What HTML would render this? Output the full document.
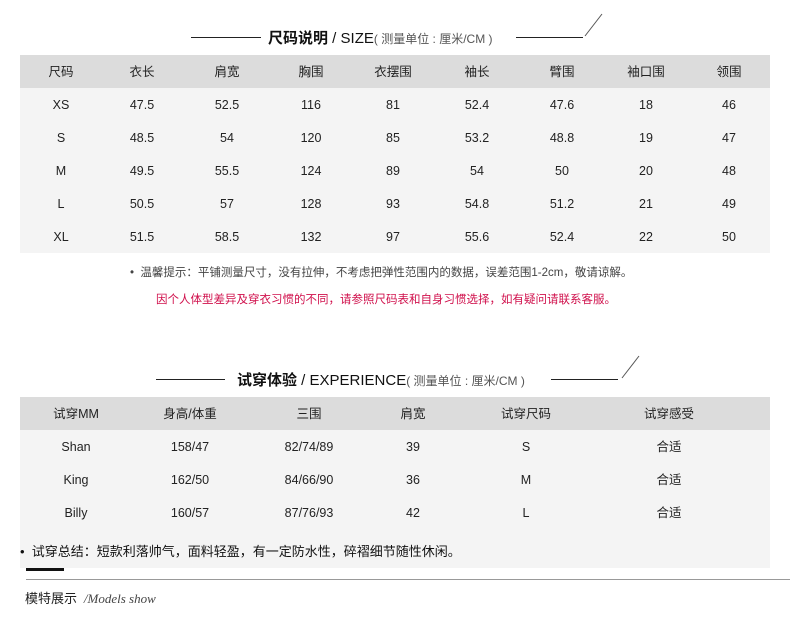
<!DOCTYPE html>
<html><head><meta charset="utf-8"><style>
body{margin:0;width:790px;height:633px;background:#fff;font-family:"Liberation Sans","Noto Sans CJK SC",sans-serif;color:#333;position:relative;overflow:hidden}
.a{position:absolute}
.c{position:absolute;transform:translateX(-50%);white-space:nowrap;font-size:12.5px;line-height:16px;color:#222}
.hd{background:#dcdcdc}
.bd{background:#f4f4f4}
.ln{position:absolute;height:1px;background:#222}
</style></head><body>
<div class="ln" style="left:191px;top:37px;width:70px"></div>
<div class="a" style="left:268px;top:27px;font-size:15px;color:#111;white-space:nowrap"><b>尺码说明</b> / SIZE<span style="font-size:12px;color:#555">( 测量单位 : 厘米/CM )</span></div>
<div class="ln" style="left:516px;top:37px;width:67px"></div>
<svg class="a" style="left:584px;top:13px" width="20" height="24"><line x1="1" y1="23" x2="18" y2="1" stroke="#555" stroke-width="1"/></svg>

<div class="a hd" style="left:20px;top:55px;width:750px;height:33px"></div>
<div class="a bd" style="left:20px;top:88px;width:750px;height:165px"></div>
<div id="t1"></div>

<div class="a" style="left:130px;top:264px;font-size:11.5px;color:#444;white-space:nowrap">•&nbsp; 温馨提示：平铺测量尺寸，没有拉伸，不考虑把弹性范围内的数据，误差范围1-2cm，敬请谅解。</div>
<div class="a" style="left:156px;top:291px;font-size:11.5px;color:#d0104c;white-space:nowrap">因个人体型差异及穿衣习惯的不同，请参照尺码表和自身习惯选择，如有疑问请联系客服。</div>

<div class="ln" style="left:156px;top:379px;width:69px"></div>
<div class="a" style="left:237px;top:369px;font-size:15px;color:#111;white-space:nowrap"><b>试穿体验</b> / EXPERIENCE<span style="font-size:12px;color:#555">( 测量单位 : 厘米/CM )</span></div>
<div class="ln" style="left:551px;top:379px;width:67px"></div>
<svg class="a" style="left:621px;top:355px" width="20" height="24"><line x1="1" y1="23" x2="18" y2="1" stroke="#555" stroke-width="1"/></svg>

<div class="a hd" style="left:20px;top:397px;width:750px;height:33px"></div>
<div class="a bd" style="left:20px;top:430px;width:750px;height:138px"></div>
<div id="t2"></div>
<div class="a" style="left:20px;top:541px;font-size:13px;color:#111;white-space:nowrap">•&nbsp; 试穿总结：短款利落帅气，面料轻盈，有一定防水性，碎褶细节随性休闲。</div>

<div class="a" style="left:26px;top:568px;width:38px;height:3px;background:#111"></div>
<div class="a" style="left:26px;top:579px;width:764px;height:1px;background:#999"></div>
<div class="a" style="left:25px;top:588px;font-size:13px;color:#222;white-space:nowrap">模特展示 <span style="font-family:'Liberation Serif',serif;font-style:italic;font-size:13px;color:#444">&nbsp;/Models show</span></div>

<script>
function T(cx,rows,top,id){var h='';rows.forEach(function(r,i){r.forEach(function(t,j){h+='<div class="c" style="left:'+cx[j]+'px;top:'+(top+i*33+9)+'px">'+t+'</div>';});});document.getElementById(id).innerHTML=h;}
T([61,142,227,311,393,477,562,646,729],[
['尺码','衣长','肩宽','胸围','衣摆围','袖长','臂围','袖口围','领围'],
['XS','47.5','52.5','116','81','52.4','47.6','18','46'],
['S','48.5','54','120','85','53.2','48.8','19','47'],
['M','49.5','55.5','124','89','54','50','20','48'],
['L','50.5','57','128','93','54.8','51.2','21','49'],
['XL','51.5','58.5','132','97','55.6','52.4','22','50']],55,'t1');
T([76,190,309,413,526,669],[
['试穿MM','身高/体重','三围','肩宽','试穿尺码','试穿感受'],
['Shan','158/47','82/74/89','39','S','合适'],
['King','162/50','84/66/90','36','M','合适'],
['Billy','160/57','87/76/93','42','L','合适']],397,'t2');
</script>
</body></html>
